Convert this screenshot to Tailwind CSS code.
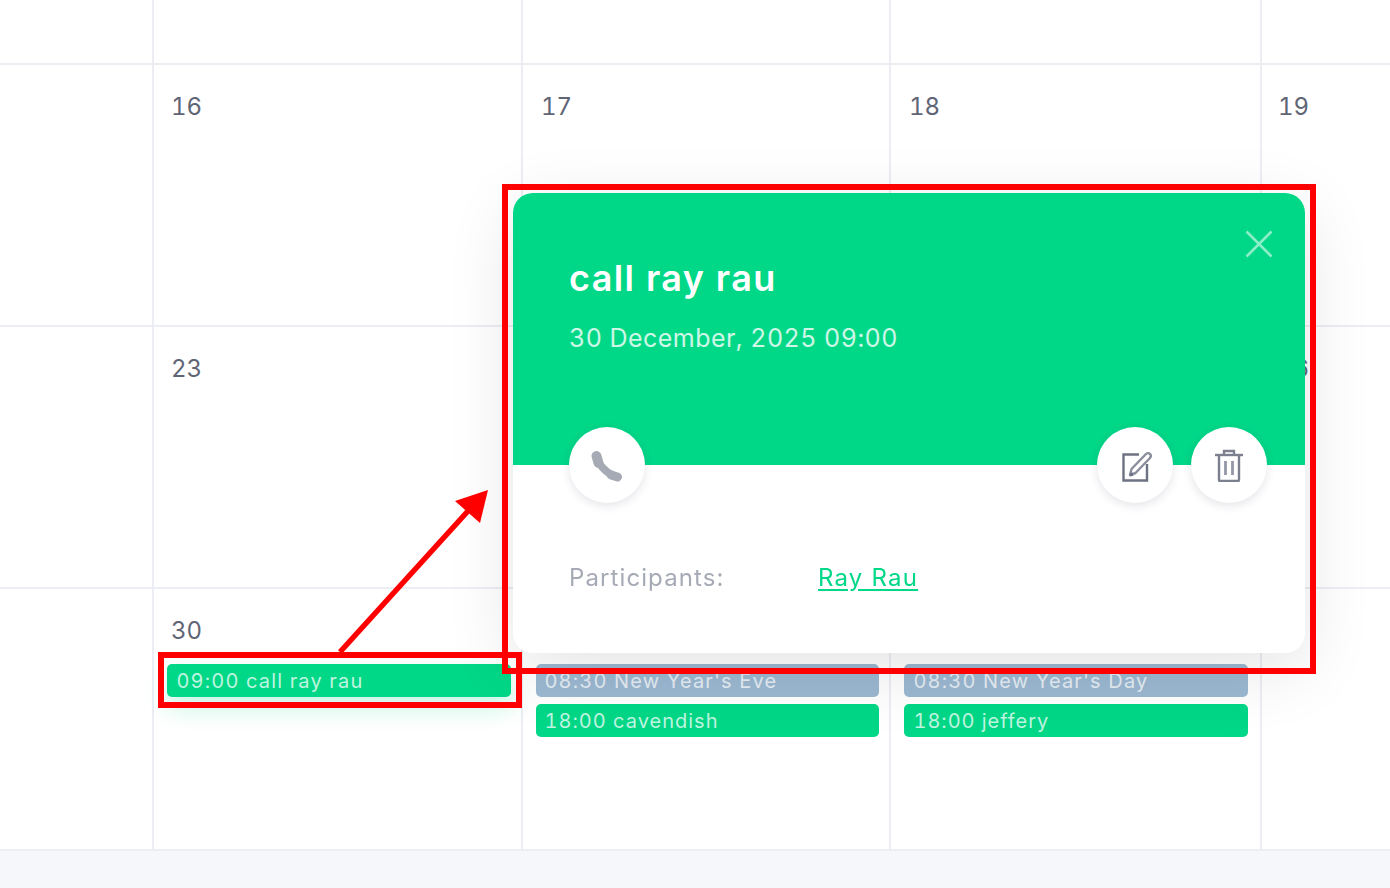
<!doctype html>
<html>
<head>
<meta charset="utf-8">
<script src="https://cdn.jsdelivr.net/npm/@tailwindcss/browser@4"></script>
</head>
<body class="m-0">
<div class="relative w-[1390px] h-[888px] overflow-hidden bg-[#f6f7fb] font-['Inter','Noto_Sans',sans-serif]">
  <div class="blur-[0.5px]">
  <div class="grid grid-cols-[154px_369px_368px_371px_128px] grid-rows-[65px_262px_262px_260px] bg-white text-[24px] leading-[30px] tabular-nums text-[#5f6575] border-b-2 border-[#eceef4]">
    <div class="border-r-2 border-b-2 border-[#eceef4]"></div>
    <div class="border-r-2 border-b-2 border-[#eceef4]"></div>
    <div class="border-r-2 border-b-2 border-[#eceef4]"></div>
    <div class="border-r-2 border-b-2 border-[#eceef4]"></div>
    <div class="border-b-2 border-[#eceef4]"></div>

    <div class="border-r-2 border-b-2 border-[#eceef4]"></div>
    <div class="border-r-2 border-b-2 border-[#eceef4] pl-[17px] pt-[27px]">16</div>
    <div class="border-r-2 border-b-2 border-[#eceef4] pl-[18px] pt-[27px]">17</div>
    <div class="border-r-2 border-b-2 border-[#eceef4] pl-[18px] pt-[27px]">18</div>
    <div class="border-b-2 border-[#eceef4] pl-[16px] pt-[27px]">19</div>

    <div class="border-r-2 border-b-2 border-[#eceef4]"></div>
    <div class="border-r-2 border-b-2 border-[#eceef4] pl-[17px] pt-[27px]">23</div>
    <div class="border-r-2 border-b-2 border-[#eceef4] pl-[18px] pt-[27px]">24</div>
    <div class="border-r-2 border-b-2 border-[#eceef4] pl-[18px] pt-[27px]">25</div>
    <div class="border-b-2 border-[#eceef4] pl-[16px] pt-[27px]">26</div>

    <div class="border-r-2 border-[#eceef4]"></div>
    <div class="border-r-2 border-[#eceef4] pt-[27px]">
      <div class="pl-[17px]">30</div>
      <div class="mt-[18px] ml-[13px] mr-[10px] h-[33px] rounded-[5px] bg-[#00d787] pl-[9.500px] text-[20px] leading-[35px] tracking-[1.15px] text-white/75 shadow-[0_12px_24px_rgba(0,215,135,0.22)]">09:00 call ray rau</div>
    </div>
    <div class="border-r-2 border-[#eceef4] pt-[27px]">
      <div class="pl-[18px]">31</div>
      <div class="mt-[18px] ml-[13px] mr-[10px] flex flex-col gap-[7px] text-[20px] leading-[35px] text-white/75">
        <div class="h-[33px] rounded-[5px] bg-[#9cb9d2] pl-[8.500px] tracking-[1.15px]">08:30 New Year's Eve</div>
        <div class="h-[33px] rounded-[5px] bg-[#00d787] pl-[8.500px] tracking-[1px]">18:00 cavendish</div>
      </div>
    </div>
    <div class="border-r-2 border-[#eceef4] pt-[27px]">
      <div class="pl-[18px]">1</div>
      <div class="mt-[18px] ml-[13px] mr-[12px] flex flex-col gap-[7px] text-[20px] leading-[35px] text-white/75">
        <div class="h-[33px] rounded-[5px] bg-[#9cb9d2] pl-[9.500px] tracking-[1.15px]">08:30 New Year's Day</div>
        <div class="h-[33px] rounded-[5px] bg-[#00d787] pl-[9.500px] tracking-[0.95px]">18:00 jeffery</div>
      </div>
    </div>
    <div></div>
  </div>

  <div class="absolute left-[513px] top-[193px] w-[792px] h-[460px] rounded-[20px] bg-white shadow-[0_16px_70px_rgba(0,0,0,0.11)]">
    <div class="relative h-[272px] rounded-t-[20px] bg-[#00d787] pl-[56px] pt-[62px] text-white">
      <div class="text-[36px] leading-[46px] font-semibold tracking-[1.4px]">call ray rau</div>
      <div class="mt-[21px] text-[25px] leading-[32px] tracking-[0.46px] tabular-nums text-white/80">30 December, 2025 09:00</div>
      <svg class="absolute right-[32px] top-[37px] w-[28px] h-[28px]" viewBox="0 0 28 28" fill="none" stroke="#ffffff" stroke-opacity="0.55" stroke-width="2.6"><path d="M1.500 1.500L26.500 26.500M26.500 1.500L1.500 26.500"/></svg>
    </div>
    <div class="-mt-[38px] relative flex justify-between pl-[56px] pr-[38px]">
      <div class="flex h-[76px] w-[76px] items-center justify-center rounded-full bg-white shadow-[0_3px_10px_rgba(30,40,70,0.12)]">
        <svg class="w-[34px] h-[34px]" viewBox="0 0 34 34" fill="none" stroke="#a6aab5" stroke-linecap="round">
          <path d="M6.500 8C7.500 15 15 25 27 29" stroke-width="7.500"/>
          <path d="M6.500 8L8.500 15" stroke-width="10"/>
          <path d="M21 27L27.500 29" stroke-width="9"/>
        </svg>
      </div>
      <div class="flex gap-[18px]">
        <div class="flex h-[76px] w-[76px] items-center justify-center rounded-full bg-white shadow-[0_3px_10px_rgba(30,40,70,0.12)]">
          <svg class="w-[34px] h-[34px]" viewBox="0 0 34 34" fill="none" stroke="#6d7282" stroke-width="2.400">
            <path d="M21 6.500H5.500v26h23.500V16"/>
            <path d="M12 27l1.500-6L27.500 6.500c1.500-1.500 3.500-1.500 4.500-.5 1.200 1.200 1 3-.5 4.500L17.500 25z" stroke-linejoin="round" stroke="#8a8e9c"/>
            <path d="M12 27l3-1" stroke-width="3"/>
          </svg>
        </div>
        <div class="flex h-[76px] w-[76px] items-center justify-center rounded-full bg-white shadow-[0_3px_10px_rgba(30,40,70,0.12)]">
          <svg class="w-[34px] h-[34px]" viewBox="0 0 34 34" fill="none" stroke="#7b7f8e" stroke-width="2.400">
            <path d="M3 7h28"/>
            <path d="M12 6.500V3h10v3.500"/>
            <path d="M7 7v25c0 .6.400 1 1 1h18c.6 0 1-.4 1-1V7"/>
            <path d="M13.500 13v14M20.500 13v14" stroke="#9498a6" stroke-width="2.800"/>
          </svg>
        </div>
      </div>
    </div>
    <div class="mt-[59px] flex pl-[56px] text-[24px] leading-[32px] tracking-[1.1px]">
      <div class="w-[249px] text-[#a6aab5]">Participants:</div>
      <a class="tracking-[1.2px] text-[#00d787] underline underline-offset-[3px]">Ray Rau</a>
    </div>
  </div>
  </div>

  <div class="absolute left-[502px] top-[184px] w-[814px] h-[490px] border-[6px] border-[#ff0000]"></div>
  <div class="absolute left-[158px] top-[652px] w-[364px] h-[56px] border-[6px] border-[#ff0000]"></div>
  <svg class="absolute left-0 top-0 w-[1390px] h-[888px]" viewBox="0 0 1390 888" fill="none">
    <path d="M340 652L468 511" stroke="#ff0000" stroke-width="5.500"/>
    <path d="M488 490L455 501L480 523Z" fill="#ff0000"/>
  </svg>
</div>
</body>
</html>
